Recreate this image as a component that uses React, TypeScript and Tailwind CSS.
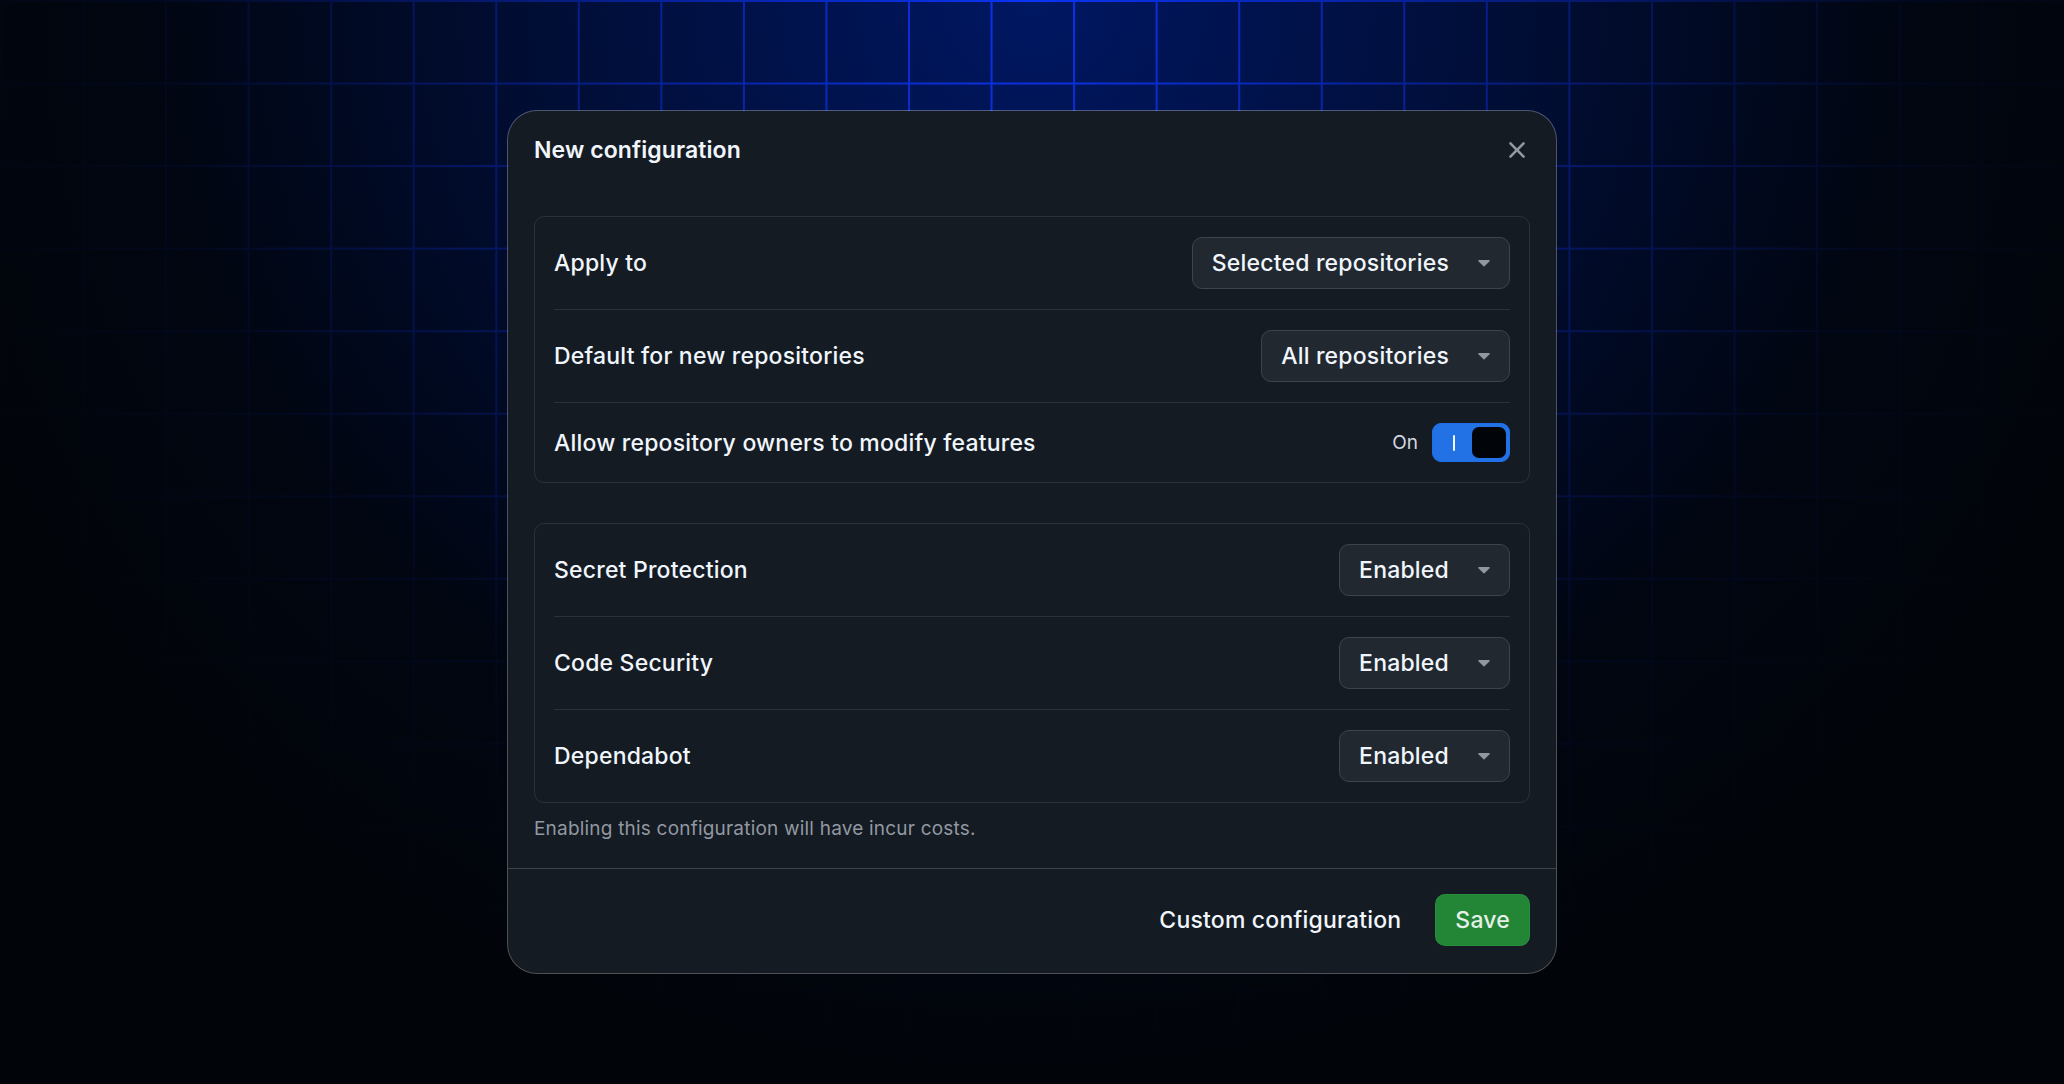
import type { ReactNode } from 'react'

const FONT = "font-['Inter','Noto_Sans',sans-serif]"

function Caret() {
  return (
    <svg width="12" height="7" viewBox="0 0 12 7" aria-hidden="true">
      <path
        d="M0.9 0h10.2a.7.7 0 0 1 .5 1.2L6.5 6.3a.7.7 0 0 1-1 0L.4 1.2A.7.7 0 0 1 .9 0Z"
        fill="#9198a1"
      />
    </svg>
  )
}

function Select({ value }: { value: string }) {
  return (
    <button className="flex h-[52px] items-center gap-[29px] rounded-[10px] border border-[#3d444d] bg-[#212830] px-[19px] text-[23px] font-medium leading-[28px] tracking-[0.2px] text-[#f0f6fc]">
      <span>{value}</span>
      <Caret />
    </button>
  )
}

function Toggle() {
  return (
    <div className="flex items-center gap-[14px]">
      <span className="text-[19px] leading-[24px] text-[#d1d7e0]">On</span>
      <button
        aria-pressed="true"
        className="flex h-[39px] w-[78px] items-center rounded-[9px] border border-[#1f6feb] bg-[#2272e6] p-[3px]"
      >
        <span className="flex flex-1 justify-center">
          <span className="h-4 w-[2px] rounded-full bg-[#f0f6fc]" />
        </span>
        <span className="h-full w-[34px] rounded-[7px] bg-[#010409]" />
      </button>
    </div>
  )
}

function Row({ label, children }: { label: string; children: ReactNode }) {
  return (
    <div className="flex items-center justify-between border-b border-[#2a313c] py-5 last:border-b-0">
      <span className="text-[23px] font-medium leading-[28px] tracking-[0.2px] text-[#f0f6fc]">
        {label}
      </span>
      {children}
    </div>
  )
}

function Card({ children }: { children: ReactNode }) {
  return <div className="rounded-[10px] border border-[#2a313c] px-[19px]">{children}</div>
}

export default function App() {
  return (
    <div
      className={`${FONT} flex h-screen w-full items-center justify-center bg-[#010409] [background-image:radial-gradient(ellipse_56%_100%_at_50%_0%,transparent_0%,rgba(1,4,9,0.5)_42%,rgba(1,4,9,0.9)_75%,#010409_100%),linear-gradient(to_right,#0b34f5_2px,transparent_2px),linear-gradient(to_bottom,#0b34f5_2px,transparent_2px),linear-gradient(#001762,#001762)] [background-size:100%_100%,82.56px_82.56px,82.56px_82.56px,100%_100%]`}
    >
      <div className="w-[1050px] rounded-[30px] border border-white/30 bg-[#151b23] bg-clip-padding">
        <div className="px-[26px]">
          <div className="flex h-[77px] items-center justify-between">
            <h2 className="text-[23px] font-semibold leading-[28px] tracking-[0.1px] text-[#f0f6fc]">
              New configuration
            </h2>
            <button aria-label="Close" className="-mr-[3px] flex h-8 w-8 items-center justify-center">
              <svg width="28" height="28" viewBox="0 0 16 16" fill="#9198a1" aria-hidden="true">
                <path d="M3.72 3.72a.75.75 0 0 1 1.06 0L8 6.94l3.22-3.22a.749.749 0 0 1 1.275.326.749.749 0 0 1-.215.734L9.06 8l3.22 3.22a.749.749 0 0 1-.326 1.275.749.749 0 0 1-.734-.215L8 9.06l-3.22 3.22a.751.751 0 0 1-1.042-.018.751.751 0 0 1-.018-1.042L6.94 8 3.72 4.78a.75.75 0 0 1 0-1.06Z" />
              </svg>
            </button>
          </div>

          <div className="pt-[28px]">
            <Card>
              <Row label="Apply to">
                <Select value="Selected repositories" />
              </Row>
              <Row label="Default for new repositories">
                <Select value="All repositories" />
              </Row>
              <Row label="Allow repository owners to modify features">
                <Toggle />
              </Row>
            </Card>

            <div className="mt-[40px]">
              <Card>
                <Row label="Secret Protection">
                  <Select value="Enabled" />
                </Row>
                <Row label="Code Security">
                  <Select value="Enabled" />
                </Row>
                <Row label="Dependabot">
                  <Select value="Enabled" />
                </Row>
              </Card>
            </div>

            <p className="mt-[13px] pb-[26px] text-[19px] leading-[26px] tracking-[0.2px] text-[#9198a1]">
              Enabling this configuration will have incur costs.
            </p>
          </div>
        </div>

        <div className="flex items-center justify-end gap-[34px] border-t border-[#3d444d] px-[26px] pb-[27px] pt-[25px]">
          <span className="text-[23px] font-medium leading-[28px] tracking-[0.2px] text-[#f0f6fc]">
            Custom configuration
          </span>
          <button className="h-[52px] rounded-[10px] border border-[#2ea043]/40 bg-[#238636] px-[19px] text-[23px] font-medium leading-[28px] tracking-[0.2px] text-[#e6f0e9]">
            Save
          </button>
        </div>
      </div>
    </div>
  )
}
